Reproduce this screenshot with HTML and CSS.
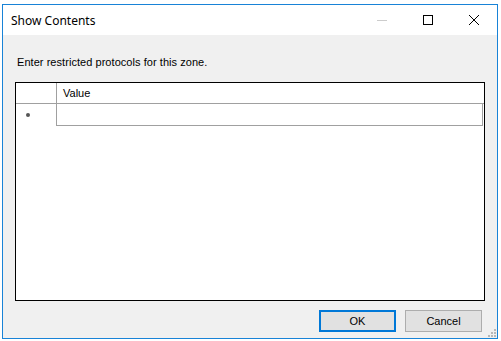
FILE: index.html
```html
<!DOCTYPE html>
<html lang="en">
<head>
    <meta charset="UTF-8">
    <title>Show Contents</title>
    <link rel="stylesheet" href="styles.css">
</head>
<body>

    <div class="window">

        <!-- Title bar -->
        <div class="titlebar">
            <span class="title">Show Contents</span>
            <div class="caption-buttons">
                <div class="caption-btn disabled">
                    <svg width="10" height="10" viewBox="0 0 10 10"><path d="M0 5.5H10" stroke="#cccccc" stroke-width="1"/></svg>
                </div>
                <div class="caption-btn">
                    <svg width="10" height="10" viewBox="0 0 10 10"><rect x="0.5" y="0.5" width="9" height="9" fill="none" stroke="#000" stroke-width="1"/></svg>
                </div>
                <div class="caption-btn">
                    <svg width="10" height="10" viewBox="0 0 10 10"><path d="M0 0L10 10M10 0L0 10" stroke="#000" stroke-width="1"/></svg>
                </div>
            </div>
        </div>

        <!-- Dialog body -->
        <div class="content">
            <p class="prompt">Enter restricted protocols for this zone.</p>

            <div class="grid">
                <div class="grid-row header">
                    <div class="row-head"></div>
                    <div class="cell">Value</div>
                </div>
                <div class="grid-row new-row">
                    <div class="row-head"><span class="new-glyph"></span></div>
                    <div class="cell current"></div>
                </div>
            </div>

            <div class="buttons">
                <button class="btn default">OK</button>
                <button class="btn">Cancel</button>
            </div>

            <div class="grip">
                <i></i><i></i><i></i><i></i><i></i><i></i>
            </div>
        </div>

    </div>

</body>
</html>
```

FILE: styles.css
```css
body {
    margin: 0;
    background: #ffffff;
    font-family: "Liberation Sans", Arial, sans-serif;
    font-size: 11px;
    color: #000;
}

.window {
    margin: 4px 0 0 2px;
    width: 496px;
    height: 335px;
    box-sizing: border-box;
    border: 1px solid #1883d7;
    display: flex;
    flex-direction: column;
    background: #f0f0f0;
}

/* Title bar */
.titlebar {
    height: 30px;
    background: #ffffff;
    display: flex;
    align-items: center;
    justify-content: space-between;
}
.title {
    font-family: "Noto Sans", "Open Sans", sans-serif;
    font-size: 12px;
    padding-left: 8px;
    padding-top: 1px;
}
.caption-buttons { display: flex; height: 100%; }
.caption-btn {
    width: 46px;
    height: 100%;
    display: flex;
    align-items: center;
    justify-content: center;
}

/* Content */
.content {
    flex: 1;
    position: relative;
    padding: 21px 12px 0 12px;
    display: flex;
    flex-direction: column;
}
.prompt {
    margin: 0 0 13px 2px;
    line-height: 13px;
    letter-spacing: 0.05px;
}

/* Data grid */
.grid {
    height: 219px;
    box-sizing: border-box;
    border: 1px solid #000;
    background: #ffffff;
}
.grid-row { display: flex; }
.row-head {
    flex: none;
    width: 41px;
    box-sizing: border-box;
    border-right: 1px solid #a0a0a0;
    display: flex;
    align-items: center;
    padding-left: 10px;
}
.cell {
    flex: 1;
    display: flex;
    align-items: center;
    padding-left: 6px;
}
.header { height: 21px; border-bottom: 1px solid #a0a0a0; box-sizing: border-box; }
.new-row { height: 22px; }
.new-row .row-head { border-right: none; width: 40px; }
.cell.current {
    border: 1px solid #a0a0a0;
    border-top: none;
    margin-right: 1px;
}
.new-glyph {
    width: 4px;
    height: 4px;
    border-radius: 50%;
    background: #555;
    margin-top: -1px;
}

/* Dialog buttons */
.buttons {
    display: flex;
    justify-content: flex-end;
    gap: 9px;
    margin-top: 9px;
    margin-right: 3px;
}
.btn {
    width: 77px;
    height: 22px;
    box-sizing: border-box;
    background: #e1e1e1;
    border: 1px solid #adadad;
    font-family: "Liberation Sans", Arial, sans-serif;
    font-size: 11px;
    color: #000;
    padding: 0;
}
.btn.default { border: 2px solid #0078d7; }

/* Resize grip */
.grip {
    position: absolute;
    right: 1px;
    bottom: 1px;
    width: 8px;
    height: 8px;
}
.grip i {
    position: absolute;
    width: 2px;
    height: 2px;
    background: #b8b8b8;
}
.grip i:nth-child(1) { right: 0; bottom: 0; }
.grip i:nth-child(2) { right: 3px; bottom: 0; }
.grip i:nth-child(3) { right: 6px; bottom: 0; }
.grip i:nth-child(4) { right: 0; bottom: 3px; }
.grip i:nth-child(5) { right: 3px; bottom: 3px; }
.grip i:nth-child(6) { right: 0; bottom: 6px; }
```
